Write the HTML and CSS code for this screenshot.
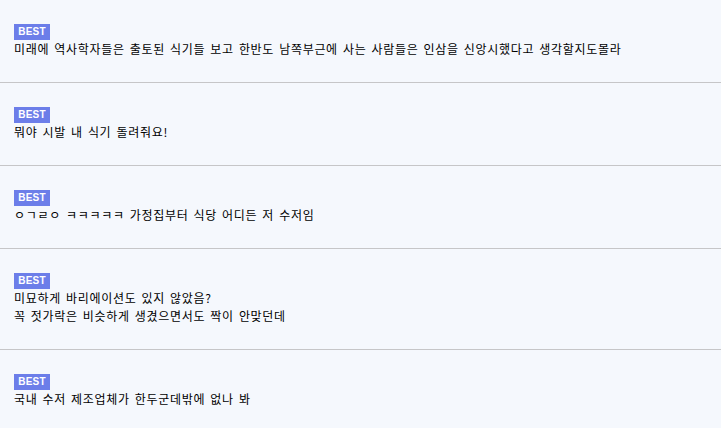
FILE: index.html
```html
<!DOCTYPE html>
<html lang="ko">
<head>
<meta charset="utf-8">
<link rel="stylesheet" href="styles.css">
</head>
<body>
<ul class="list">
  <li class="item">
    <span class="badge">BEST</span>
    <p class="text">미래에 역사학자들은 출토된 식기들 보고 한반도 남쪽부근에 사는 사람들은 인삼을 신앙시했다고 생각할지도몰라</p>
  </li>
  <li class="item">
    <span class="badge">BEST</span>
    <p class="text">뭐야 시발 내 식기 돌려줘요!</p>
  </li>
  <li class="item">
    <span class="badge">BEST</span>
    <p class="text">ㅇㄱㄹㅇ ㅋㅋㅋㅋㅋ 가정집부터 식당 어디든 저 수저임</p>
  </li>
  <li class="item">
    <span class="badge">BEST</span>
    <p class="text">미묘하게 바리에이션도 있지 않았음?<br>꼭 젓가락은 비슷하게 생겼으면서도 짝이 안맞던데</p>
  </li>
  <li class="item">
    <span class="badge">BEST</span>
    <p class="text">국내 수저 제조업체가 한두군데밖에 없나 봐</p>
  </li>
</ul>
</body>
</html>
```
FILE: styles.css
```css
html, body {
  margin: 0;
  padding: 0;
  background: #f5f8fd;
}
body {
  font-family: "Noto Sans CJK KR", "Noto Sans", sans-serif;
  color: #000;
}
.list {
  list-style: none;
  margin: 0;
  padding: 0;
}
.item {
  display: flex;
  flex-direction: column;
  align-items: flex-start;
  padding: 24px 14px;
  border-bottom: 1px solid #c6c6c8;
}
.badge {
  display: block;
  width: 36px;
  height: 16px;
  box-sizing: border-box;
  background: #6c7ee9;
  color: #fff;
  font-family: "Liberation Sans", Arial, sans-serif;
  font-weight: bold;
  font-size: 10px;
  line-height: 16px;
  text-align: center;
  letter-spacing: 0.2px;
}
.text {
  margin: 0;
  font-size: 12px;
  line-height: 18px;
  letter-spacing: 0.7px;
  word-spacing: 1px;
}
```
